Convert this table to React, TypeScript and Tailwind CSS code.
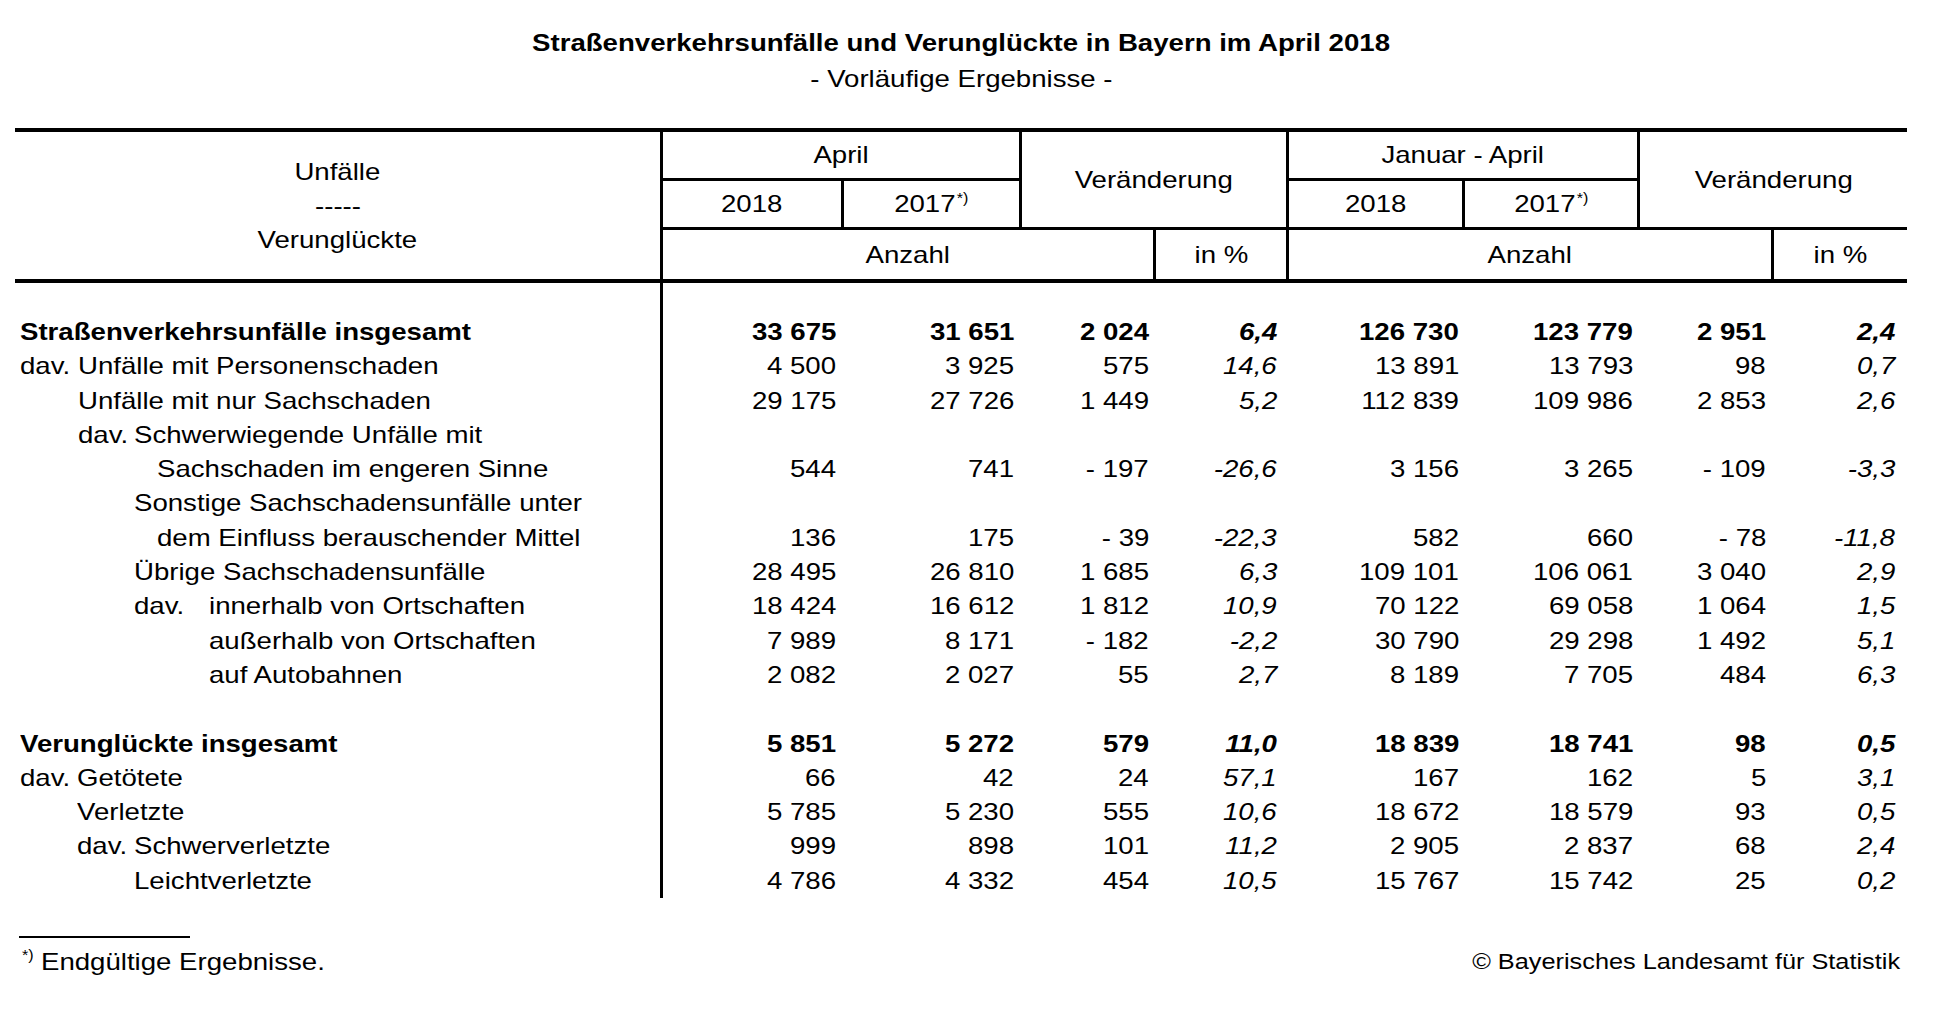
import React from 'react';

type Lab = { ind: string; pre?: string; preW?: string; text: string };
type Row = { lab: Lab; v?: string[]; bold?: boolean } | null;

const font = { fontFamily: '"Liberation Sans", Arial, sans-serif' };

const L = ({ children }: { children: React.ReactNode }) => (
  <span className="inline-block whitespace-pre scale-x-[1.15] origin-left">{children}</span>
);
const R = ({ children }: { children: React.ReactNode }) => (
  <span className="inline-block whitespace-pre scale-x-[1.15] origin-right">{children}</span>
);
const C = ({ children }: { children: React.ReactNode }) => (
  <span className="inline-flex items-start whitespace-pre scale-x-[1.15] origin-center">{children}</span>
);

const Sup = () => <span className="text-[14px] leading-none mt-[5px] ml-[1px]">*)</span>;

const rows: Row[] = [
  { lab: { ind: 'pl-[5px]', text: 'Straßenverkehrsunfälle insgesamt' }, bold: true, v: ['33 675', '31 651', '2 024', '6,4', '126 730', '123 779', '2 951', '2,4'] },
  { lab: { ind: 'pl-[5px]', pre: 'dav.', preW: 'w-[58px]', text: 'Unfälle mit Personenschaden' }, v: ['4 500', '3 925', '575', '14,6', '13 891', '13 793', '98', '0,7'] },
  { lab: { ind: 'pl-[63px]', text: 'Unfälle mit nur Sachschaden' }, v: ['29 175', '27 726', '1 449', '5,2', '112 839', '109 986', '2 853', '2,6'] },
  { lab: { ind: 'pl-[63px]', pre: 'dav.', preW: 'w-[56px]', text: 'Schwerwiegende Unfälle mit' } },
  { lab: { ind: 'pl-[142px]', text: 'Sachschaden im engeren Sinne' }, v: ['544', '741', '- 197', '-26,6', '3 156', '3 265', '- 109', '-3,3'] },
  { lab: { ind: 'pl-[119px]', text: 'Sonstige Sachschadensunfälle unter' } },
  { lab: { ind: 'pl-[142px]', text: 'dem Einfluss berauschender Mittel' }, v: ['136', '175', '- 39', '-22,3', '582', '660', '- 78', '-11,8'] },
  { lab: { ind: 'pl-[119px]', text: 'Übrige Sachschadensunfälle' }, v: ['28 495', '26 810', '1 685', '6,3', '109 101', '106 061', '3 040', '2,9'] },
  { lab: { ind: 'pl-[119px]', pre: 'dav.', preW: 'w-[75px]', text: 'innerhalb von Ortschaften' }, v: ['18 424', '16 612', '1 812', '10,9', '70 122', '69 058', '1 064', '1,5'] },
  { lab: { ind: 'pl-[194px]', text: 'außerhalb von Ortschaften' }, v: ['7 989', '8 171', '- 182', '-2,2', '30 790', '29 298', '1 492', '5,1'] },
  { lab: { ind: 'pl-[194px]', text: 'auf Autobahnen' }, v: ['2 082', '2 027', '55', '2,7', '8 189', '7 705', '484', '6,3'] },
  null,
  { lab: { ind: 'pl-[5px]', text: 'Verunglückte insgesamt' }, bold: true, v: ['5 851', '5 272', '579', '11,0', '18 839', '18 741', '98', '0,5'] },
  { lab: { ind: 'pl-[5px]', pre: 'dav.', preW: 'w-[57px]', text: 'Getötete' }, v: ['66', '42', '24', '57,1', '167', '162', '5', '3,1'] },
  { lab: { ind: 'pl-[62px]', text: 'Verletzte' }, v: ['5 785', '5 230', '555', '10,6', '18 672', '18 579', '93', '0,5'] },
  { lab: { ind: 'pl-[62px]', pre: 'dav.', preW: 'w-[57px]', text: 'Schwerverletzte' }, v: ['999', '898', '101', '11,2', '2 905', '2 837', '68', '2,4'] },
  { lab: { ind: 'pl-[119px]', text: 'Leichtverletzte' }, v: ['4 786', '4 332', '454', '10,5', '15 767', '15 742', '25', '0,2'] },
];

const numCls = [
  'border-l-[3px] border-black pr-[5px] text-right',
  'pr-[5px] text-right',
  'pr-[4px] text-right',
  'pr-[9px] text-right italic',
  'pr-[3px] text-right',
  'pr-[4px] text-right',
  'pr-[5px] text-right',
  'pr-[12px] text-right italic',
];

const Cell = ({ className, children }: { className: string; children: React.ReactNode }) => (
  <div className={'flex items-center justify-center border-black ' + className}>{children}</div>
);

export default function App() {
  return (
    <div className="min-h-screen bg-white text-black text-[24px]" style={font}>
      <div className="ml-[15px] w-[1892px] pt-[26px]">
        <div className="text-center leading-[34px] font-bold">
          <C>Straßenverkehrsunfälle und Verunglückte in Bayern im April 2018</C>
        </div>
        <div className="text-center leading-[34px] mt-[2px]">
          <C>- Vorläufige Ergebnisse -</C>
        </div>

        {/* Kopf */}
        <div className="mt-[32px] flex border-y-4 border-black">
          <div className="w-[645px] flex flex-col items-center justify-center leading-[34px]">
            <C>Unfälle</C>
            <C>-----</C>
            <C>Verunglückte</C>
          </div>
          <div className="grid grid-cols-[181px_178px_134px_133px_176px_175px_134px_136px] grid-rows-[49px_49px_49px]">
            <Cell className="col-span-2 border-l-[3px] border-b-[3px]"><C>April</C></Cell>
            <Cell className="col-span-2 row-span-2 border-l-[3px] border-b-[3px]"><C>Veränderung</C></Cell>
            <Cell className="col-span-2 border-l-[3px] border-b-[3px]"><C>Januar - April</C></Cell>
            <Cell className="col-span-2 row-span-2 border-l-[3px] border-b-[3px]"><C>Veränderung</C></Cell>
            <Cell className="border-l-[3px] border-b-[3px]"><C>2018</C></Cell>
            <Cell className="border-l-[3px] border-b-[3px]"><C>2017<Sup /></C></Cell>
            <Cell className="border-l-[3px] border-b-[3px]"><C>2018</C></Cell>
            <Cell className="border-l-[3px] border-b-[3px]"><C>2017<Sup /></C></Cell>
            <Cell className="col-span-3 border-l-[3px]"><C>Anzahl</C></Cell>
            <Cell className="border-l-[3px]"><C>in %</C></Cell>
            <Cell className="col-span-3 border-l-[3px]"><C>Anzahl</C></Cell>
            <Cell className="border-l-[3px]"><C>in %</C></Cell>
          </div>
        </div>

        {/* Daten */}
        <div className="grid grid-cols-[645px_181px_178px_134px_133px_176px_175px_134px_136px] h-[32px]">
          <div />
          <div className="border-l-[3px] border-black" />
        </div>
        {rows.map((r, i) => (
          <div
            key={i}
            className={
              'grid grid-cols-[645px_181px_178px_134px_133px_176px_175px_134px_136px] h-[34.3px] leading-[34.3px] ' +
              (r?.bold ? 'font-bold' : '')
            }
          >
            <div className={'flex ' + (r ? r.lab.ind : '')}>
              {r?.lab.pre && (
                <span className={'shrink-0 ' + r.lab.preW}>
                  <L>{r.lab.pre}</L>
                </span>
              )}
              {r && <L>{r.lab.text}</L>}
            </div>
            {numCls.map((c, j) => (
              <div key={j} className={c}>
                {r?.v && <R>{r.v[j]}</R>}
              </div>
            ))}
          </div>
        ))}

        {/* Fußnote */}
        <div className="mt-[38px] ml-[4px] h-[2px] w-[171px] bg-black" />
        <div className="mt-[7px] flex justify-between leading-[34px]">
          <div className="flex items-start pl-[7px]">
            <span className="w-[19px] text-[14px] leading-none mt-[3px]">
              <L>*)</L>
            </span>
            <L>Endgültige Ergebnisse.</L>
          </div>
          <div className="pr-[7px] text-[22px]">
            <R>© Bayerisches Landesamt für Statistik</R>
          </div>
        </div>
      </div>
    </div>
  );
}
